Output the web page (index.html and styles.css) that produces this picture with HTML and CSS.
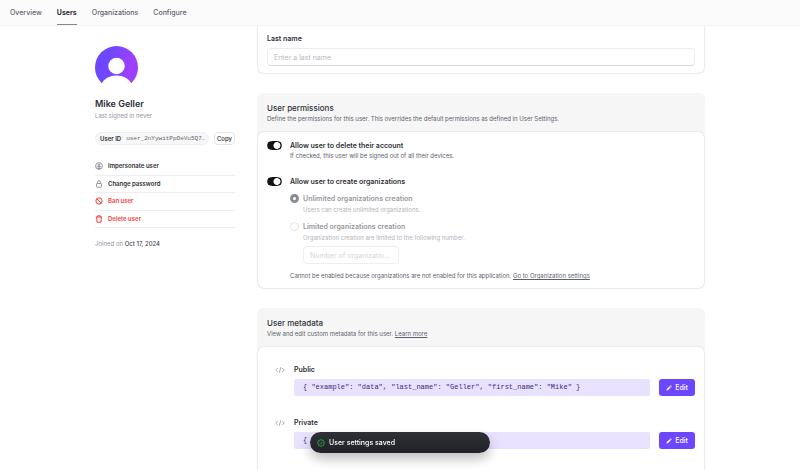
FILE: index.html
```html
<!DOCTYPE html>
<html lang="en">
<head>
  <meta charset="UTF-8">
  <meta name="viewport" content="width=device-width, initial-scale=1.0">
  <title>Mike Geller - Users</title>
  <link rel="stylesheet" href="styles.css">
</head>
<body>
  <nav class="topnav">
    <a href="#">Overview</a>
    <a href="#" class="active">Users</a>
    <a href="#">Organizations</a>
    <a href="#">Configure</a>
  </nav>

  <div class="page">
    <aside class="profile">
      <svg class="avatar" viewBox="0 0 86 86">
        <defs>
          <linearGradient id="avatarFill" x1="0" y1="0.3" x2="1" y2="0.6">
            <stop offset="0.25" stop-color="#6c47ff"/>
            <stop offset="0.8" stop-color="#9d3fff"/>
          </linearGradient>
        </defs>
        <circle cx="43" cy="43" r="43" fill="url(#avatarFill)"/>
        <circle cx="43" cy="40" r="16.5" fill="#fff"/>
        <path d="M12 76 Q22 59 43 59 Q64 59 74 76 L74 86 L12 86 Z" fill="#fff"/>
      </svg>
      <h1>Mike Geller</h1>
      <p class="muted">Last signed in never</p>

      <div class="user-id">
        <div class="id-pill"><strong>User ID</strong><code>user_2nYywitPpOeVu5Q7…</code></div>
        <button type="button" class="copy-btn">Copy</button>
      </div>

      <ul class="actions">
        <li>
          <button type="button">
            <svg viewBox="0 0 16 16"><circle cx="8" cy="8" r="6.8"/><circle cx="8" cy="6" r="2"/><path d="M3.5 9.5h9M8 9.5v4M5.5 13h5"/></svg>
            Impersonate user
          </button>
        </li>
        <li>
          <button type="button">
            <svg viewBox="0 0 16 16"><rect x="3" y="7" width="10" height="7.5" rx="1.5"/><path d="M5 7V4.500a3 3 0 0 1 6 0V7"/></svg>
            Change password
          </button>
        </li>
        <li>
          <button type="button" class="danger">
            <svg viewBox="0 0 16 16"><circle cx="8" cy="8" r="6.300"/><path d="M3.600 3.600l8.800 8.800"/></svg>
            Ban user
          </button>
        </li>
        <li>
          <button type="button" class="danger">
            <svg viewBox="0 0 16 16"><path d="M1.500 4h13M3.300 4l.7 10.500h8L12.700 4M5.500 4V1.500h5V4"/></svg>
            Delete user
          </button>
        </li>
      </ul>
      <p class="muted">Joined on <b>Oct 17, 2024</b></p>
    </aside>

    <main class="settings">
      <section class="panel panel-open">
        <form class="panel-body name-form">
          <label for="lastName">Last name</label>
          <input type="text" id="lastName" class="text-input" placeholder="Enter a last name">
        </form>
      </section>

      <section class="panel">
        <header class="panel-head">
          <h2>User permissions</h2>
          <p>Define the permissions for this user. This overrides the default permissions as defined in User Settings.</p>
        </header>
        <form class="panel-body permissions">
          <div class="permission">
            <input type="checkbox" id="allowDelete" class="switch" checked>
            <div>
              <label for="allowDelete">Allow user to delete their account</label>
              <p>If checked, this user will be signed out of all their devices.</p>
            </div>
          </div>
          <div class="permission">
            <input type="checkbox" id="allowCreate" class="switch" checked>
            <div>
              <label for="allowCreate">Allow user to create organizations</label>
              <div class="options">
                <input type="radio" name="orgLimit" id="unlimited" checked disabled>
                <div class="option">
                  <label for="unlimited">Unlimited organizations creation</label>
                  <p>Users can create unlimited organizations.</p>
                </div>
                <input type="radio" name="orgLimit" id="limited" disabled>
                <div class="option">
                  <label for="limited">Limited organizations creation</label>
                  <p>Organization creation are limited to the following number.</p>
                  <input type="text" class="text-input" aria-label="Number of organizations" placeholder="Number of organizatio..." disabled>
                </div>
              </div>
              <p class="note">Cannot be enabled because organizations are not enabled for this application. <a href="#">Go to Organization settings</a></p>
            </div>
          </div>
        </form>
      </section>

      <section class="panel">
        <header class="panel-head">
          <h2>User metadata</h2>
          <p>View and edit custom metadata for this user. <a href="#">Learn more</a></p>
        </header>
        <div class="panel-body metadata">
          <div class="meta">
            <svg class="code-icon" viewBox="0 0 20 16"><path d="M5.500 4L1.500 8l4 4M14.500 4l4 4-4 4M11.500 2.500l-3 11"/></svg>
            <h3>Public</h3>
            <code>{ "example": "data", "last_name": "Geller", "first_name": "Mike" }</code>
            <button type="button" class="edit-btn">
              <svg viewBox="0 0 12 12"><path d="M1 11l.6-2.800L7.200 2.600l2.200 2.200L3.800 10.400zM8 1.800L9 .8q.5-.4 1 0L11.200 2q.4.5 0 1l-1 1z"/></svg>
              Edit
            </button>
          </div>
          <div class="meta">
            <svg class="code-icon" viewBox="0 0 20 16"><path d="M5.500 4L1.500 8l4 4M14.500 4l4 4-4 4M11.500 2.500l-3 11"/></svg>
            <h3>Private</h3>
            <code>{ }</code>
            <button type="button" class="edit-btn">
              <svg viewBox="0 0 12 12"><path d="M1 11l.6-2.800L7.200 2.600l2.200 2.200L3.800 10.400zM8 1.800L9 .8q.5-.4 1 0L11.200 2q.4.5 0 1l-1 1z"/></svg>
              Edit
            </button>
          </div>
        </div>
      </section>
    </main>
  </div>

  <div class="toast" role="status">
    <svg viewBox="0 0 16 16"><circle cx="8" cy="8" r="6.500"/><path d="M5.200 8.300l2 2 3.600-4.300"/></svg>
    User settings saved
  </div>
</body>
</html>
```
FILE: styles.css
```css
* {
  box-sizing: border-box;
}
body {
  margin: 0;
  height: 100vh;
  display: flex;
  flex-direction: column;
  overflow: hidden;
  background: #fff;
  color: #2f3037;
  font-family: Inter, "Liberation Sans", sans-serif;
  font-size: 7px;
  line-height: 10px;
}
h1, h2, h3, p, ul {
  margin: 0;
  padding: 0;
}
button, input {
  margin: 0;
  font: inherit;
  color: inherit;
}
button {
  cursor: pointer;
}
a {
  color: inherit;
}
label {
  display: block;
}

.topnav {
  display: flex;
  flex-shrink: 0;
  gap: 15px;
  height: 26px;
  padding: 0 10px;
  background: #fbfbfb;
  border-bottom: 1px solid #f6f6f7;
  line-height: 25px;
}
.topnav a {
  color: #5e5f6e;
  font-weight: 500;
  text-decoration: none;
}
.topnav .active {
  color: #2f3037;
  font-weight: 700;
  border-bottom: 1px solid #85858b;
}

.page {
  flex: 1;
  min-height: 0;
  overflow: hidden;
  display: grid;
  grid-template-columns: 140px 1fr;
  gap: 22px;
  width: 100%;
  max-width: 650px;
  margin: 0 auto;
  padding: 0 20px;
}

.profile {
  padding-top: 20px;
}
.avatar {
  display: block;
  width: 43px;
  height: 43px;
  margin-bottom: 8px;
}
h1 {
  font-size: 9px;
  line-height: 13px;
  font-weight: 600;
}
.muted {
  margin-top: 1px;
  color: #9394a1;
  font-size: 6px;
}
.muted b {
  color: #42434d;
  font-weight: 500;
}
.user-id {
  display: flex;
  gap: 5px;
  margin: 11px 0 13px;
}
.id-pill {
  flex: 1;
  min-width: 0;
  display: flex;
  gap: 5px;
  height: 13px;
  padding: 0 4px;
  overflow: hidden;
  background: #f7f7f8;
  border: 1px solid #eeeef0;
  border-radius: 7px;
  font-size: 6px;
  line-height: 11px;
  white-space: nowrap;
}
.id-pill strong {
  font-weight: 600;
}
.id-pill code {
  color: #5e5f6e;
  font-family: "Liberation Mono", monospace;
}
.copy-btn {
  height: 13px;
  padding: 0 2px;
  background: #fff;
  border: 1px solid #e6e6ea;
  border-radius: 4px;
  font-size: 6px;
  font-weight: 500;
  line-height: 10px;
}
.actions {
  display: grid;
  grid-auto-rows: 1fr;
  height: 70px;
  margin-bottom: 11px;
  list-style: none;
}
.actions li {
  display: flex;
  border-bottom: 1px solid #eeeef0;
}
.actions button {
  display: flex;
  align-items: center;
  gap: 5px;
  padding: 0;
  background: none;
  border: none;
  font-size: 6px;
  font-weight: 600;
}
.actions svg {
  width: 8px;
  height: 8px;
  fill: none;
  stroke: #747686;
  stroke-width: 1.5;
}
.actions .danger {
  color: #ef4444;
}
.actions .danger svg {
  stroke: #ef4444;
  stroke-width: 2;
}

.settings {
  display: flex;
  flex-direction: column;
  gap: 19px;
  min-width: 0;
}
.panel {
  flex-shrink: 0;
  padding: 0 1px 1px;
  background: #f6f6f6;
  border-radius: 6px;
}
.panel-open {
  margin-top: -10px;
}
.panel-head {
  padding: 9px 9px 8px;
}
.panel-head p {
  color: #5e5f6e;
  font-size: 6px;
}
h2 {
  font-size: 8px;
  line-height: 12px;
  font-weight: 500;
}
.panel-body {
  background: #fff;
  border-radius: 6px;
  box-shadow: 0 0 2px rgba(0, 0, 0, 0.15);
}

.name-form {
  padding: 18px 9px 7px;
}
.name-form label {
  margin-bottom: 4px;
  font-weight: 600;
}
.text-input {
  display: block;
  width: 100%;
  height: 18px;
  padding: 0 6px;
  background: #fff;
  border: 1px solid #ececef;
  border-bottom-color: #d9d9de;
  border-radius: 4px;
}
.text-input::placeholder {
  color: #b7b8c2;
  opacity: 1;
}

.permissions {
  display: grid;
  gap: 16px;
  padding: 9px 9px 7px;
}
.permission {
  display: flex;
  gap: 8px;
}
.permission label {
  font-weight: 600;
}
.permission p {
  color: #5e5f6e;
  font-size: 6px;
}
.switch {
  appearance: none;
  flex-shrink: 0;
  width: 15px;
  height: 9px;
  border: 1px solid #131316;
  border-radius: 5px;
  background: radial-gradient(circle at 9px 50%, #fff 3px, #131316 4px);
}
.options {
  display: grid;
  grid-template-columns: 9px auto;
  gap: 7px 4px;
  justify-content: start;
  margin: 7px 0;
}
.options [type="radio"] {
  appearance: none;
  width: 9px;
  height: 9px;
  border: 1px solid #e6e6ea;
  border-radius: 50%;
}
.options [type="radio"]:checked {
  border: 3px solid #8c8c90;
}
.option label {
  color: #97979e;
}
.option p {
  margin-top: 1px;
  color: #b3b3ba;
}
.option .text-input {
  width: 96px;
  margin-top: 3px;
  border-color: #eeeef0;
}
.option .text-input::placeholder {
  color: #d5d5da;
}

.metadata {
  display: grid;
  gap: 22px;
  padding: 18px 9px 40px 17px;
}
.meta {
  display: grid;
  grid-template-columns: 10px 1fr auto;
  gap: 4px 9px;
  align-items: center;
}
.code-icon {
  width: 10px;
  height: 8px;
  fill: none;
  stroke: #8c8d96;
  stroke-width: 1.5;
}
h3 {
  grid-column: 2 / 4;
  font-size: 7px;
  line-height: 10px;
  font-weight: 600;
}
.meta code {
  grid-column: 2;
  padding: 0 9px;
  background: #e8e2ff;
  border-radius: 2px;
  color: #3a2a80;
  font: 7px/17px "Liberation Mono", monospace;
}
.edit-btn {
  display: flex;
  align-items: center;
  gap: 3px;
  height: 17px;
  padding: 0 7px;
  background: #6c47ff;
  border: none;
  border-radius: 3px;
  color: #fff;
  font-weight: 500;
}
.edit-btn svg {
  width: 6px;
  height: 6px;
  fill: #fff;
}

.toast {
  position: fixed;
  bottom: 17px;
  left: 50%;
  display: flex;
  align-items: center;
  gap: 4px;
  width: 180px;
  height: 21px;
  margin-left: -90px;
  padding: 0 7px;
  background: linear-gradient(#2f3037, #212126);
  border-radius: 11px;
  box-shadow: 0 6px 12px rgba(0, 0, 0, 0.25);
  color: #fff;
  font-weight: 500;
}
.toast svg {
  width: 8px;
  height: 8px;
  fill: none;
  stroke: #22c543;
  stroke-width: 1.5;
}
```
